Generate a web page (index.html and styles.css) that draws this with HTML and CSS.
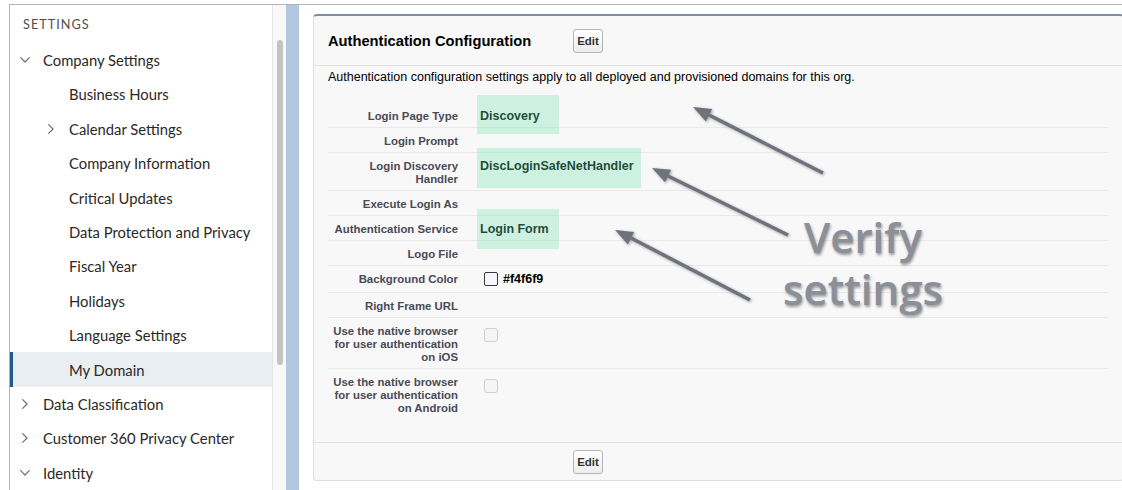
FILE: index.html
```html
<!DOCTYPE html>
<html lang="en">
<head>
<meta charset="utf-8">
<title>My Domain | Setup</title>
<link rel="stylesheet" href="styles.css">
</head>
<body>
<div class="window">
  <aside class="nav">
    <div class="nav-title">SETTINGS</div>
    <ul class="tree">
      <li class="item lvl1"><span class="slot"><svg class="chev-down" width="10" height="6" viewBox="0 0 10 6"><path d="M0.7 0.7L5 5L9.3 0.7"/></svg></span><span>Company Settings</span></li>
      <li class="item lvl2"><span class="slot"></span><span>Business Hours</span></li>
      <li class="item lvl2"><span class="slot"><svg class="chev-right" width="6" height="10" viewBox="0 0 6 10"><path d="M0.7 0.7L5 5L0.7 9.3"/></svg></span><span>Calendar Settings</span></li>
      <li class="item lvl2"><span class="slot"></span><span>Company Information</span></li>
      <li class="item lvl2"><span class="slot"></span><span>Critical Updates</span></li>
      <li class="item lvl2"><span class="slot"></span><span>Data Protection and Privacy</span></li>
      <li class="item lvl2"><span class="slot"></span><span>Fiscal Year</span></li>
      <li class="item lvl2"><span class="slot"></span><span>Holidays</span></li>
      <li class="item lvl2"><span class="slot"></span><span>Language Settings</span></li>
      <li class="item lvl2 active"><span class="slot"></span><span>My Domain</span></li>
      <li class="item lvl1"><span class="slot"><svg class="chev-right" width="6" height="10" viewBox="0 0 6 10"><path d="M0.7 0.7L5 5L0.7 9.3"/></svg></span><span>Data Classification</span></li>
      <li class="item lvl1"><span class="slot"><svg class="chev-right" width="6" height="10" viewBox="0 0 6 10"><path d="M0.7 0.7L5 5L0.7 9.3"/></svg></span><span>Customer 360 Privacy Center</span></li>
      <li class="item lvl1"><span class="slot"><svg class="chev-down" width="10" height="6" viewBox="0 0 10 6"><path d="M0.7 0.7L5 5L9.3 0.7"/></svg></span><span>Identity</span></li>
    </ul>
  </aside>
  <div class="scroll"><div class="thumb"></div></div>
  <div class="divider"></div>
  <main class="main">
    <section class="card">
      <header class="card-head">
        <h2 class="card-title">Authentication Configuration</h2>
        <button class="btn" type="button">Edit</button>
      </header>
      <div class="card-body">
        <p class="desc">Authentication configuration settings apply to all deployed and provisioned domains for this org.</p>
        <div class="detail">
          <div class="row"><div class="label">Login Page Type</div><div class="value hl hl-page">Discovery</div></div>
          <div class="row"><div class="label">Login Prompt</div><div class="value"></div></div>
          <div class="row"><div class="label">Login Discovery Handler</div><div class="value hl hl-handler">DiscLoginSafeNetHandler</div></div>
          <div class="row"><div class="label">Execute Login As</div><div class="value"></div></div>
          <div class="row"><div class="label">Authentication Service</div><div class="value hl hl-service">Login Form</div></div>
          <div class="row"><div class="label">Logo File</div><div class="value"></div></div>
          <div class="row"><div class="label">Background Color</div><div class="value value-color"><span class="swatch"></span>#f4f6f9</div></div>
          <div class="row"><div class="label">Right Frame URL</div><div class="value"></div></div>
          <div class="row"><div class="label">Use the native browser for user authentication on iOS</div><div class="value"><span class="check"></span></div></div>
          <div class="row"><div class="label">Use the native browser for user authentication on Android</div><div class="value"><span class="check"></span></div></div>
        </div>
      </div>
      <footer class="card-foot">
        <span class="spacer"></span>
        <button class="btn" type="button">Edit</button>
      </footer>
    </section>
  </main>
</div>

<svg class="arrows" width="1122" height="490" viewBox="0 0 1122 490">
  <g class="arrow">
    <line x1="823" y1="173" x2="709" y2="115"/>
    <polygon points="693,107 712.2,108.9 705.9,121.4"/>
  </g>
  <g class="arrow">
    <line x1="788" y1="235" x2="668" y2="176"/>
    <polygon points="652,168 671.2,169.7 665,182.2"/>
  </g>
  <g class="arrow">
    <line x1="750" y1="300" x2="631" y2="238"/>
    <polygon points="615,230 634.2,232.1 627.8,244.5"/>
  </g>
</svg>
<div class="callout">Verify<br>settings</div>
</body>
</html>
```

FILE: styles.css
```css
* { box-sizing: border-box; }

html, body {
  margin: 0;
  padding: 0;
}

body {
  width: 1122px;
  height: 490px;
  overflow: hidden;
  background: #fff;
  position: relative;
}

/* outer frame */
.window {
  margin: 4px 0 0 9px;
  height: 486px;
  display: flex;
  border-top: 1px solid #b4b4b4;
  border-left: 1px solid #b4b4b4;
  overflow: hidden;
}

/* setup tree */
.nav {
  width: 262px;
  flex: none;
  background: #fff;
  font-family: Lato, "Open Sans", sans-serif;
  color: #2b2826;
}

.nav-title {
  height: 37.8px;
  padding: 10px 0 0 13px;
  font-size: 12.7px;
  line-height: 18px;
  letter-spacing: 1px;
  color: #514f4d;
}

.tree {
  list-style: none;
  margin: 0;
  padding: 0;
}

.item {
  display: flex;
  align-items: center;
  height: 34.4px;
  font-size: 14.8px;
}

.lvl1 { padding-left: 10px; }
.lvl2 { padding-left: 38px; }

.slot {
  flex: none;
  display: flex;
  align-items: center;
}

.lvl1 .slot { width: 23px; }
.lvl2 .slot { width: 21px; }

.lvl1 .chev-right { margin-left: 2px; }

.chev-down path,
.chev-right path {
  fill: none;
  stroke: #706e6b;
  stroke-width: 1.2;
  stroke-linecap: round;
  stroke-linejoin: round;
}

.item.active {
  background: #e9eef2;
  box-shadow: inset 3px 0 0 #23598c;
}

/* scrollbar + splitter */
.scroll {
  width: 14px;
  flex: none;
  background: #f8f8f8;
  border-left: 1px solid #e6e6e6;
  padding: 35px 0 0 4px;
}

.thumb {
  width: 6px;
  height: 325px;
  border-radius: 3px;
  background: #c3c3c3;
}

.divider {
  width: 13px;
  flex: none;
  background: #b2c6e0;
}

/* content */
.main {
  flex: 1;
  min-width: 0;
  padding: 9px 0 0 14px;
}

.card {
  width: 811px;
  background: #f8f8f8;
  border: 1px solid #dedede;
  border-top: 2px solid #7f8ea6;
  border-radius: 4px;
  font-family: "Liberation Sans", Arial, sans-serif;
}

.card-head {
  display: flex;
  align-items: center;
  height: 50px;
  padding-left: 14px;
  border-bottom: 1px solid #e3e3e3;
}

.card-title {
  width: 245px;
  margin: 0;
  font-size: 14.7px;
  font-weight: bold;
  color: #000;
}

.btn {
  width: 30px;
  height: 24px;
  padding: 0;
  border: 1px solid #b5b5b5;
  border-radius: 3px;
  background: linear-gradient(#ffffff, #ededed);
  font: bold 11.5px "Liberation Sans", Arial, sans-serif;
  color: #333;
}

.card-body {
  padding: 4px 15px 23px 14px;
}

.desc {
  margin: 0 0 18px;
  font-size: 12.5px;
  line-height: 15px;
  color: #000;
}

.row {
  display: flex;
  border-bottom: 1px solid #e9e9e9;
}

.row:last-child { border-bottom: none; }

.label {
  width: 130px;
  flex: none;
  padding: 7px 0 4px;
  text-align: right;
  font-size: 11.4px;
  font-weight: bold;
  line-height: 13px;
  color: #4a4a56;
}

.value {
  flex: 1;
  padding: 7px 0 4px 22px;
  font-size: 12.5px;
  font-weight: bold;
  line-height: 13px;
  color: #000;
}

.value-color {
  display: flex;
  align-items: center;
  padding-top: 6px;
  padding-bottom: 6px;
}

.swatch {
  width: 14px;
  height: 14px;
  margin: 0 5px 0 4px;
  border: 1px solid #3a3a3a;
  border-radius: 2px;
  background: #f4f6f9;
}

.check {
  display: block;
  width: 14px;
  height: 14px;
  margin: 3px 0 0 4px;
  border: 1px solid #d0d0d0;
  border-radius: 3px;
  background: #f5f5f5;
}

/* highlighted values */
.hl { position: relative; }

.hl::after {
  content: "";
  position: absolute;
  left: 19px;
  background: rgba(112, 228, 176, 0.32);
}

.hl-page::after    { top: -8px; width: 82px;  height: 39px; }
.hl-handler::after { top: -5px; width: 164px; height: 40px; }
.hl-service::after { top: -7px; width: 82px;  height: 40px; }

.card-foot {
  display: flex;
  padding: 7px 0 6px 14px;
  border-top: 1px solid #e0e0e0;
}

.spacer {
  width: 245px;
  flex: none;
}

/* annotation layer */
.arrows {
  position: absolute;
  left: 0;
  top: 0;
  pointer-events: none;
  filter: drop-shadow(1px 1px 1.5px rgba(0, 0, 0, 0.35));
}

.arrow line {
  stroke: #6d727d;
  stroke-width: 3.5;
}

.arrow polygon {
  fill: #6d727d;
}

.callout {
  position: absolute;
  left: 763px;
  top: 211px;
  width: 200px;
  text-align: center;
  font-family: "Open Sans", sans-serif;
  font-weight: 600;
  font-size: 42px;
  line-height: 52px;
  color: #8a8f99;
  text-shadow: 1px 2px 3px rgba(0, 0, 0, 0.4);
}
```
